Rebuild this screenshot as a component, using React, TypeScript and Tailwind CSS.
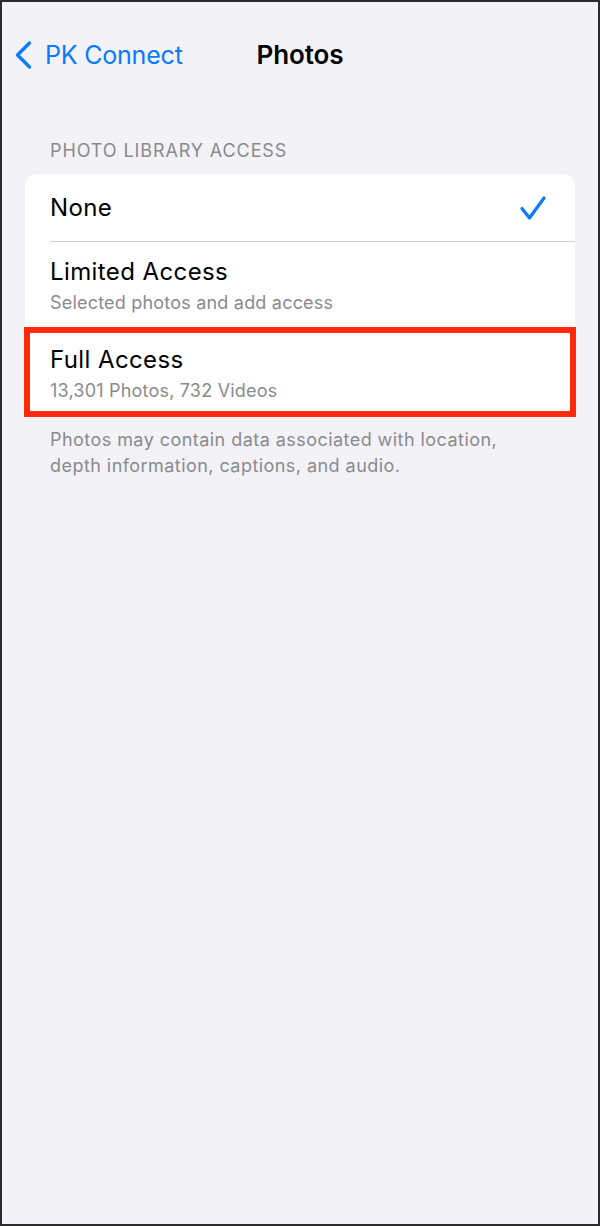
import React from "react";

function Chevron() {
  return (
    <svg width="20" height="30" viewBox="0 0 20 30" fill="none">
      <path d="M16.5 3 L4.5 15 L16.5 27" stroke="#0a7aff" strokeWidth="3.4" strokeLinecap="round" strokeLinejoin="round" />
    </svg>
  );
}

function Check() {
  return (
    <svg width="28" height="26" viewBox="0 0 28 26" fill="none">
      <path d="M3 13.5 L10.5 23 L25 3" stroke="#0a7aff" strokeWidth="3.2" strokeLinecap="round" strokeLinejoin="round" />
    </svg>
  );
}

export default function App() {
  return (
    <div
      className="w-[600px] h-[1226px] border-2 border-[#2b2b2b] bg-[#f2f2f7] flex flex-col"
      style={{ fontFamily: 'Inter, "Noto Sans", Roboto, sans-serif' }}
    >
      <div className="grid grid-cols-[1fr_auto_1fr] items-center h-[44px] mt-[31px]">
        <div className="flex items-center pl-[11px] gap-[12px] text-[#0a7aff] text-[25px] leading-none">
          <Chevron />
          <span className="tracking-[-0.2px]">PK Connect</span>
        </div>
        <div className="text-black text-[26px] font-semibold leading-none tracking-[-0.1px]">Photos</div>
        <div />
      </div>

      <div className="mt-[62px] pl-[48px] text-[18px] leading-[24px] text-[#8a8a8e] tracking-[0.9px]">
        PHOTO LIBRARY ACCESS
      </div>

      <div className="mt-[11px] mx-[23px] bg-white rounded-[12px]">
        <div className="h-[67px] flex items-center justify-between pl-[25px] pr-[28px]">
          <span className="text-[24px] text-black tracking-[0.4px]">None</span>
          <Check />
        </div>
        <div className="ml-[25px] h-px bg-[#d1d1d6]" />
        <div className="h-[87px] flex flex-col justify-center pl-[25px]">
          <span className="text-[24px] leading-[30px] text-black tracking-[0.4px]">Limited Access</span>
          <span className="text-[18px] leading-[22px] mt-[5px] text-[#8a8a8e] tracking-[0.2px]">Selected photos and add access</span>
        </div>
        <div className="relative h-[88px] flex flex-col justify-center pl-[25px]">
          <span className="text-[24px] leading-[30px] text-black tracking-[0.4px]">Full Access</span>
          <span className="text-[18px] leading-[22px] mt-[5px] text-[#8a8a8e] tracking-[0.2px]">13,301 Photos, 732 Videos</span>
          <div className="absolute -top-[2px] bottom-0 -left-[1px] -right-[1px] border-[6px] border-[#ff2a0a]" />
        </div>
      </div>

      <div className="mt-[10px] pl-[48px] pr-[20px] text-[18px] leading-[26px] text-[#8a8a8e] tracking-[0.45px]">
        Photos may contain data associated with location,
        <br />
        depth information, captions, and audio.
      </div>
    </div>
  );
}
